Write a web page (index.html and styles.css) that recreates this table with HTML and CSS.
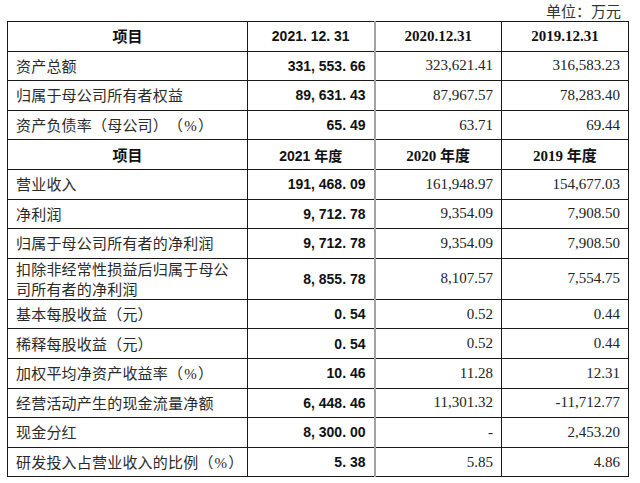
FILE: index.html
```html
<!DOCTYPE html>
<html lang="zh">
<head>
<meta charset="utf-8">
<link rel="stylesheet" href="styles.css">
</head>
<body>
<div class="page">
  <div class="unit">单位：万元</div>
  <table class="fin">
    <colgroup>
      <col class="c-name">
      <col class="c-num">
      <col class="c-num">
      <col class="c-num">
    </colgroup>
    <tr class="head">
      <td class="name">项目</td>
      <td class="cur">2021. 12. 31</td>
      <td class="prev">2020.12.31</td>
      <td class="prev">2019.12.31</td>
    </tr>
    <tr><td class="name">资产总额</td><td class="cur">331, 553. 66</td><td class="prev">323,621.41</td><td class="prev">316,583.23</td></tr>
    <tr><td class="name">归属于母公司所有者权益</td><td class="cur">89, 631. 43</td><td class="prev">87,967.57</td><td class="prev">78,283.40</td></tr>
    <tr><td class="name">资产负债率（母公司）（<span class="pct">%</span>）</td><td class="cur">65. 49</td><td class="prev">63.71</td><td class="prev">69.44</td></tr>
    <tr class="head">
      <td class="name">项目</td>
      <td class="cur">2021 年度</td>
      <td class="prev">2020 <span class="cjk">年度</span></td>
      <td class="prev">2019 <span class="cjk">年度</span></td>
    </tr>
    <tr><td class="name">营业收入</td><td class="cur">191, 468. 09</td><td class="prev">161,948.97</td><td class="prev">154,677.03</td></tr>
    <tr><td class="name">净利润</td><td class="cur">9, 712. 78</td><td class="prev">9,354.09</td><td class="prev">7,908.50</td></tr>
    <tr><td class="name">归属于母公司所有者的净利润</td><td class="cur">9, 712. 78</td><td class="prev">9,354.09</td><td class="prev">7,908.50</td></tr>
    <tr class="tall"><td class="name">扣除非经常性损益后归属于母公<br>司所有者的净利润</td><td class="cur">8, 855. 78</td><td class="prev">8,107.57</td><td class="prev">7,554.75</td></tr>
    <tr><td class="name">基本每股收益（元）</td><td class="cur">0. 54</td><td class="prev">0.52</td><td class="prev">0.44</td></tr>
    <tr><td class="name">稀释每股收益（元）</td><td class="cur">0. 54</td><td class="prev">0.52</td><td class="prev">0.44</td></tr>
    <tr><td class="name">加权平均净资产收益率（<span class="pct">%</span>）</td><td class="cur">10. 46</td><td class="prev">11.28</td><td class="prev">12.31</td></tr>
    <tr><td class="name">经营活动产生的现金流量净额</td><td class="cur">6, 448. 46</td><td class="prev">11,301.32</td><td class="prev">-11,712.77</td></tr>
    <tr><td class="name">现金分红</td><td class="cur">8, 300. 00</td><td class="prev">-</td><td class="prev">2,453.20</td></tr>
    <tr><td class="name">研发投入占营业收入的比例（<span class="pct">%</span>）</td><td class="cur">5. 38</td><td class="prev">5.85</td><td class="prev">4.86</td></tr>
  </table>
</div>
</body>
</html>
```

FILE: styles.css
```css
html, body {
  margin: 0;
  padding: 0;
  background: #ffffff;
}

.page {
  width: 622px;
  padding: 0 0 0 7px;
}

.unit {
  height: 21px;
  line-height: 21px;
  text-align: right;
  padding-right: 8px;
  font-family: "Noto Sans CJK SC", sans-serif;
  font-size: 15px;
  color: #333333;
  text-spacing-trim: space-all;
}

.fin {
  border-collapse: collapse;
  table-layout: fixed;
  width: 622px;
}

.c-name { width: 240px; }
.c-num { width: 127px; }

.fin tr {
  height: 29.6px;
}

.fin tr.tall {
  height: 41px;
}

.fin td {
  border: 1px solid #1a1a1a;
  padding: 0 8px;
  vertical-align: middle;
  white-space: nowrap;
}

.fin td.cur {
  border-right: 2px solid #a3a3a3;
}

.name {
  padding-left: 9px;
  font-family: "Noto Sans CJK SC", sans-serif;
  font-size: 15px;
  line-height: 20px;
  color: #2a2a2a;
  text-align: left;
  text-spacing-trim: space-all;
  letter-spacing: 0.2px;
}

.pct {
  font-family: "Liberation Serif", serif;
  padding: 0 1px;
}

.cur {
  font-family: "Liberation Sans", Arial, sans-serif;
  font-weight: bold;
  font-size: 14px;
  color: #111111;
  text-align: right;
}

.prev {
  font-family: "Liberation Serif", "Times New Roman", serif;
  font-size: 15px;
  color: #222222;
  text-align: right;
}

.head td {
  text-align: center;
  font-weight: bold;
  color: #111111;
  letter-spacing: 0;
}

.head .name {
  font-family: "Noto Sans CJK SC", sans-serif;
}

.head .cur {
  font-family: "Liberation Sans", "Noto Sans CJK SC", sans-serif;
}

.head .prev {
  font-family: "Liberation Serif", "Noto Sans CJK SC", serif;
  font-size: 15px;
}

.cjk {
  font-family: "Noto Sans CJK SC", sans-serif;
  font-size: 15px;
}
```
